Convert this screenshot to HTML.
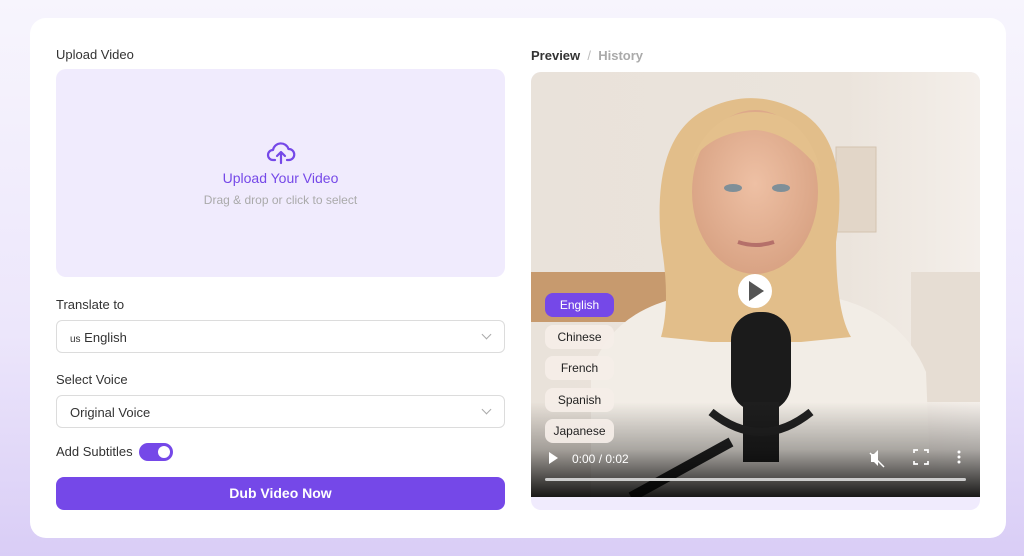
<!DOCTYPE html>
<html><head><style>
*{box-sizing:border-box;margin:0;padding:0}
body{width:1024px;height:556px;overflow:hidden;font-family:"Liberation Sans",sans-serif;background:linear-gradient(180deg,#f7f5fd 0%,#ece6fb 60%,#d9cdf6 100%);position:relative}
.card{position:absolute;left:30px;top:18px;width:976px;height:520px;background:#fff;border-radius:16px}
.lbl{position:absolute;left:56px;font-size:13px;color:#333}
.up{position:absolute;left:56px;top:69px;width:449px;height:208px;background:#f0ebfd;border-radius:10px;text-align:center}
.sel{position:absolute;left:56px;width:449px;height:33px;border:1px solid #dcdcdc;border-radius:6px;font-size:13px;color:#333;padding:9px 13px}
.sel:after{content:"";position:absolute;right:14px;top:10px;width:6px;height:6px;border-right:1px solid #aaa;border-bottom:1px solid #aaa;transform:rotate(45deg)}
.btn{position:absolute;left:56px;top:477px;width:449px;height:33px;background:#7548e8;border-radius:8px;color:#fff;font-weight:bold;font-size:14px;text-align:center;line-height:33px}
.vid{position:absolute;left:531px;top:72px;width:449px;height:438px;background:#f0ebfd;border-radius:10px;overflow:hidden}
.chip{position:absolute;left:545px;width:69px;height:24px;border-radius:8px;background:rgba(245,238,232,.92);font-size:12px;color:#222;text-align:center;line-height:24px}
</style></head><body>
<div class="card"></div>
<div class="lbl" style="top:47px">Upload Video</div>
<div class="up">
<svg style="position:absolute;left:210px;top:72px" width="30" height="24" viewBox="0 0 30 24" fill="none" stroke="#7548e8" stroke-width="2.2" stroke-linecap="round" stroke-linejoin="round"><path d="M9 19H7a5 5 0 0 1 0-10 8 8 0 0 1 15.5-1A5.5 5.5 0 0 1 23 19h-2"/><path d="M15 22V12M11 15l4-4 4 4"/></svg>
<div style="position:absolute;top:101px;width:100%;font-size:14px;color:#7548e8">Upload Your Video</div>
<div style="position:absolute;top:124px;width:100%;font-size:12px;color:#aaa">Drag &amp; drop or click to select</div>
</div>
<div class="lbl" style="top:297px">Translate to</div>
<div class="sel" style="top:320px"><span style="font-size:10px">us</span> English</div>
<div class="lbl" style="top:372px">Select Voice</div>
<div class="sel" style="top:395px">Original Voice</div>
<div class="lbl" style="top:444px">Add Subtitles</div>
<div style="position:absolute;left:139px;top:443px;width:34px;height:18px;border-radius:9px;background:#7548e8"><div style="position:absolute;right:3px;top:3px;width:12px;height:12px;border-radius:50%;background:#fff"></div></div>
<div class="btn">Dub Video Now</div>
<div style="position:absolute;left:531px;top:48px;font-size:13px"><b style="color:#333">Preview</b> <span style="color:#bbb">&nbsp;/&nbsp;</span> <b style="color:#aaa">History</b></div>
<div class="vid">
<svg width="449" height="425" viewBox="0 0 449 425">
<defs>
<linearGradient id="bg" x1="0" x2="1"><stop offset="0" stop-color="#e9e2da"/><stop offset=".7" stop-color="#ebe4dc"/><stop offset="1" stop-color="#f4efea"/></linearGradient>
<linearGradient id="bot" x1="0" y1="0" x2="0" y2="1"><stop offset="0" stop-color="#000" stop-opacity="0"/><stop offset=".5" stop-color="#000" stop-opacity=".3"/><stop offset="1" stop-color="#000" stop-opacity=".9"/></linearGradient>
<radialGradient id="face" cx=".5" cy=".45" r=".55"><stop offset="0" stop-color="#eec0a4"/><stop offset="1" stop-color="#d9a384"/></radialGradient>
</defs>
<rect width="449" height="425" fill="url(#bg)"/>
<rect x="0" y="200" width="180" height="50" fill="#c79a6e"/>
<rect x="380" y="200" width="69" height="130" fill="#e6ddd3"/>
<rect x="305" y="75" width="40" height="85" fill="#e2d6c8" stroke="#d4c4b0"/>
<path d="M60 425 L60 300 Q80 240 150 225 L300 225 Q370 240 395 300 L400 425Z" fill="#f2ede6"/>
<path d="M130 170 Q120 60 180 35 Q225 15 270 40 Q320 70 305 170 Q305 240 320 265 L270 270 L180 270 L130 265 Q140 230 130 170Z" fill="#e2be8a"/>
<ellipse cx="224" cy="120" rx="63" ry="82" fill="url(#face)"/>
<path d="M160 90 Q180 40 224 40 Q275 40 290 100 Q260 60 224 58 Q180 60 160 90Z" fill="#e4c08c"/>
<ellipse cx="202" cy="116" rx="9" ry="4" fill="#7f8f98"/><ellipse cx="250" cy="116" rx="9" ry="4" fill="#7f8f98"/>
<path d="M207 170 Q225 176 243 170" stroke="#b5706a" stroke-width="4" fill="none"/>
<rect x="200" y="240" width="60" height="100" rx="28" fill="#1b1b1b"/>
<rect x="212" y="330" width="36" height="60" fill="#1e1e1e"/>
<path d="M180 340 Q230 380 280 340" stroke="#222" stroke-width="8" fill="none"/>
<path d="M200 370 L100 425" stroke="#222" stroke-width="10"/>
<rect y="330" width="449" height="95" fill="url(#bot)"/>
<circle cx="224" cy="219" r="17" fill="#fff"/><path d="M218 209 L233 219 L218 229Z" fill="#555"/>
<path d="M18 380 L27 386 L18 392Z" fill="#fff"/>
<text x="41" y="391" fill="#fff" font-size="12" font-family="Liberation Sans">0:00 / 0:02</text>
<path d="M340 382h3l4-4v16l-4-4h-3z" fill="#fff"/><path d="M339 381l14 14" stroke="#fff" stroke-width="1.5"/>
<path d="M383 381v-3h4M393 378h4v3M397 389v3h-4M387 392h-4v-3" stroke="#fff" stroke-width="1.7" fill="none"/>
<circle cx="428" cy="380" r="1.5" fill="#fff"/><circle cx="428" cy="385" r="1.5" fill="#fff"/><circle cx="428" cy="390" r="1.5" fill="#fff"/>
<rect x="14" y="406" width="421" height="3" rx="1.5" fill="#ccc"/>
</svg>
</div>
<div class="chip" style="top:293px;background:#7548e8;color:#fff">English</div>
<div class="chip" style="top:325px">Chinese</div>
<div class="chip" style="top:356px">French</div>
<div class="chip" style="top:388px">Spanish</div>
<div class="chip" style="top:419px">Japanese</div>
</body></html>
